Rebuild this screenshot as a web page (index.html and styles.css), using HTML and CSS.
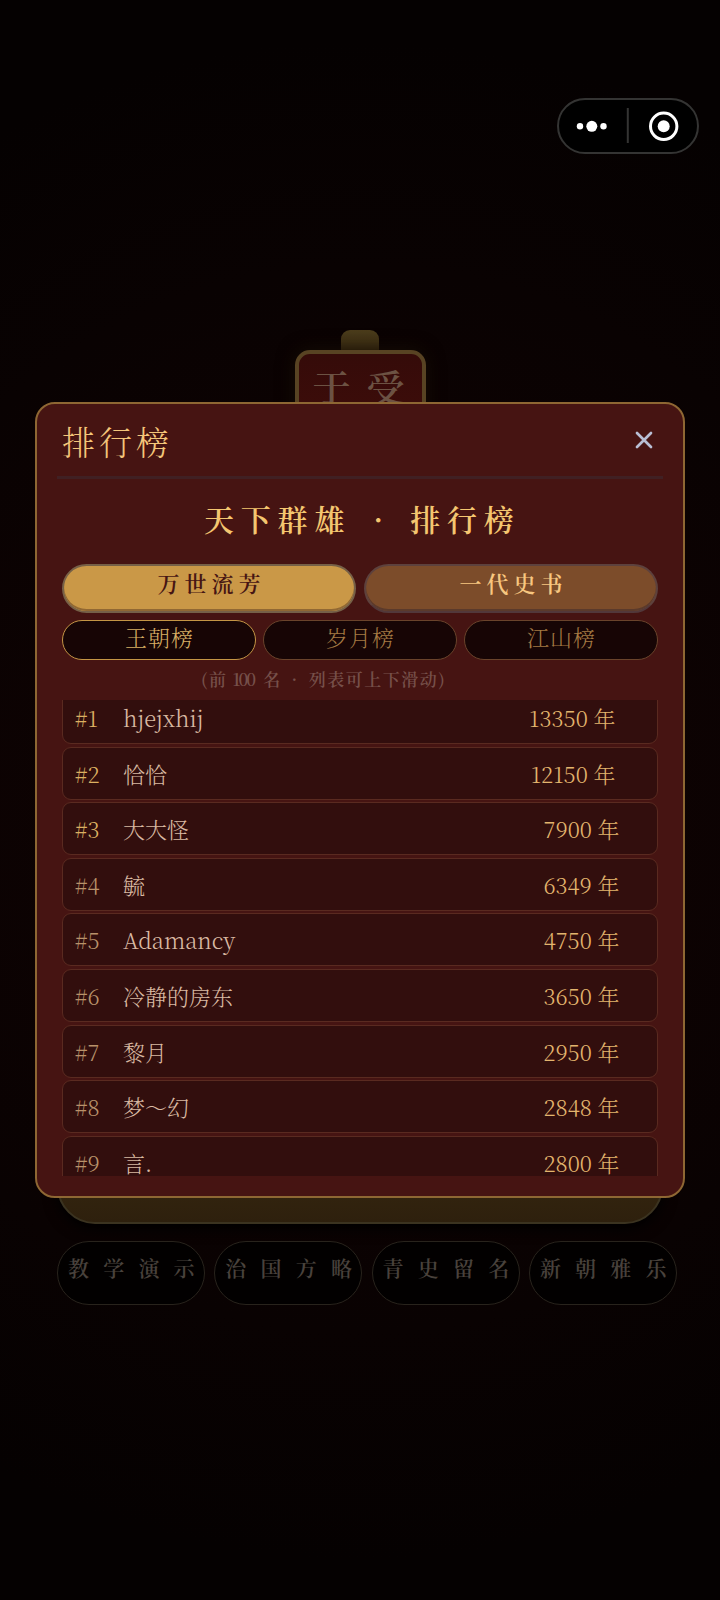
FILE: index.html
```html
<!DOCTYPE html>
<html lang="zh-CN">
<head>
<meta charset="utf-8">
<title>排行榜</title>
<link rel="stylesheet" href="styles.css">
</head>
<body>
<main class="screen">
  <div class="capsule">
    <svg viewBox="0 0 142 56" width="142" height="56">
      <rect x="1" y="1" width="140" height="54" rx="27" fill="#000" stroke="#343433" stroke-width="2"/>
      <circle cx="23" cy="28.3" r="3.2" fill="#fff"/><circle cx="34.8" cy="28.3" r="5.5" fill="#fff"/><circle cx="46.5" cy="28.3" r="3.2" fill="#fff"/>
      <path d="M70.8 10v35" stroke="#343433" stroke-width="2"/>
      <circle cx="106.7" cy="28.3" r="13.2" fill="none" stroke="#fff" stroke-width="3"/><circle cx="106.7" cy="28.3" r="6" fill="#fff"/>
    </svg>
  </div>
  <div class="emblem"><div class="knob"></div><div class="plaque">于受</div></div>
  <div class="start"></div>
  <nav class="links">
    <div class="link">教学演示</div><div class="link">治国方略</div><div class="link">青史留名</div><div class="link">新朝雅乐</div>
  </nav>

  <section class="modal">
    <header class="head">
      <h1 class="name">排行榜</h1>
      <svg class="close" viewBox="0 0 18 18" width="18" height="18"><path d="M2 2l14 14M16 2L2 16" fill="none" stroke="#b9bfd4" stroke-width="2.7" stroke-linecap="round"/></svg>
    </header>
    <h2 class="title"><span>天下群雄</span><span class="dot">·</span><span>排行榜</span></h2>
    <div class="tabs"><div class="tab on">万世流芳</div><div class="tab">一代史书</div></div>
    <div class="subs"><div class="sub on">王朝榜</div><div class="sub">岁月榜</div><div class="sub">江山榜</div></div>
    <p class="hint"><span>(前</span><span class="hundred">100</span><span>名</span><span class="sep">·</span><span>列表可上下滑动)</span></p>
    <div class="list">
      <div class="row top"><span class="rank">#1</span><span class="who">hjejxhij</span><span class="years wide">13350 年</span></div>
      <div class="row top"><span class="rank">#2</span><span class="who">恰恰</span><span class="years wide">12150 年</span></div>
      <div class="row top"><span class="rank">#3</span><span class="who">大大怪</span><span class="years">7900 年</span></div>
      <div class="row"><span class="rank">#4</span><span class="who">毓</span><span class="years">6349 年</span></div>
      <div class="row"><span class="rank">#5</span><span class="who">Adamancy</span><span class="years">4750 年</span></div>
      <div class="row"><span class="rank">#6</span><span class="who">冷静的房东</span><span class="years">3650 年</span></div>
      <div class="row"><span class="rank">#7</span><span class="who">黎月</span><span class="years">2950 年</span></div>
      <div class="row"><span class="rank">#8</span><span class="who">梦～幻</span><span class="years">2848 年</span></div>
      <div class="row last"><span class="rank">#9</span><span class="who">言.</span><span class="years">2800 年</span></div>
    </div>
  </section>
</main>
</body>
</html>
```
FILE: styles.css
```css
* { box-sizing: border-box; }
body { margin: 0; background: #050101; }
h1, h2, p { margin: 0; font-weight: 300; }

.screen {
  position: relative;
  width: 720px;
  height: 1600px;
  overflow: hidden;
  padding-top: 98px;
  background: radial-gradient(ellipse 760px 760px at 50% 50%, #120303 0%, #090202 70%, #050101 100%);
  font-family: "Noto Serif CJK SC", "Noto Sans CJK SC", serif;
  font-weight: 300;
}
.capsule { display: flex; justify-content: flex-end; height: 56px; padding-right: 21px; }

.emblem { display: flex; flex-direction: column; align-items: center; margin-top: 176px; }
.knob {
  width: 38px;
  height: 20px;
  border-radius: 9px 9px 0 0;
  background: linear-gradient(#4b3c1b, #3d2f13);
}
.plaque {
  width: 131px;
  height: 151px;
  padding: 4px 0 0 14px;
  border: 4px solid #584323;
  border-radius: 15px;
  background: linear-gradient(#350b09, #460e0b);
  box-shadow: 0 0 18px #150c04;
  color: #6c5243;
  font-size: 38px;
  font-weight: 600;
  line-height: 56px;
  letter-spacing: 16px;
  white-space: nowrap;
}
.start {
  width: 606px;
  height: 90px;
  margin: 633px 0 0 57px;
  border: 2px solid #3b3320;
  border-radius: 38px;
  background: linear-gradient(#3a2a12, #2e200d);
  box-shadow: 0 5px 14px #000;
}
.links { display: flex; gap: 9.3px; margin: 17px 0 0 57px; }
.link {
  width: 148px;
  height: 64px;
  border: 1px solid #28231c;
  border-radius: 32px;
  background: #020000;
  color: #49423c;
  font-size: 21px;
  font-weight: 600;
  line-height: 51px;
  letter-spacing: 14.2px;
  padding-left: 10px;
  white-space: nowrap;
}

/* leaderboard dialog over the home screen */
.modal {
  position: absolute;
  left: 35px;
  top: 402px;
  width: 650px;
  height: 796px;
  padding: 0 25px;
  border: 2px solid #8e6733;
  border-radius: 20px;
  background: #461412;
}
.head {
  display: flex;
  justify-content: space-between;
  height: 75px;
  margin: 0 -5px;
  padding: 0 10px 0 5px;
  border-bottom: 3px solid #402023;
}
.name { color: #f4c67a; font-size: 33px; line-height: 74px; letter-spacing: 4px; }
.close { margin-top: 27px; }
.title {
  display: flex;
  padding: 17px 0 0 142px;
  color: #f4c670;
  font-size: 30px;
  font-weight: 600;
  line-height: 44px;
  letter-spacing: 6.8px;
}
.dot { width: 59px; padding-left: 2px; text-align: center; }
.tabs { display: flex; gap: 8px; margin-top: 24px; }
.tab {
  width: 294px;
  height: 49px;
  padding-left: 5px;
  border: 2px solid #5d413d;
  border-bottom-color: #52383a;
  border-radius: 25px;
  background: #7c4c2a;
  box-shadow: inset 0 -2px #5b3a2b;
  color: #f8c780;
  font-size: 22px;
  font-weight: 600;
  line-height: 34px;
  letter-spacing: 5px;
  text-align: center;
}
.tab.on { background: #ca9847; color: #461513; border-color: #766047; box-shadow: inset 0 -2px #916833; }
.subs { display: flex; gap: 7px; margin-top: 7px; }
.sub {
  flex: 1;
  height: 40px;
  padding-left: 1px;
  border: 1px solid #6a432b;
  border-radius: 20px;
  background: #170505;
  color: #a47a43;
  font-size: 22px;
  line-height: 32px;
  letter-spacing: 1px;
  text-align: center;
}
.sub.on { border-color: #c49545; color: #d6ae64; }
.hint {
  display: flex;
  height: 40px;
  padding-left: 139px;
  color: #76504a;
  font-size: 17px;
  font-weight: 600;
  line-height: 37px;
  letter-spacing: 1.5px;
  white-space: nowrap;
}
.hundred { margin: 0 9px 0 5px; letter-spacing: -2px; }
.sep { width: 27px; text-align: center; }
.list {
  display: flex;
  flex-direction: column;
  gap: 2.6px;
  height: 476px;
  overflow: hidden;
}
.row {
  display: flex;
  flex: none;
  height: 53px;
  padding: 0 37.5px 0 12px;
  border: 1px solid #5a2a20;
  border-radius: 9px;
  background: #320e0d;
  font-size: 22px;
  line-height: 51px;
}
.row:first-child { margin-top: -9px; }
.last { height: 40px; border-bottom: 0; border-radius: 9px 9px 0 0; }
.rank { width: 48px; color: #b9926a; }
.top .rank { color: #dcb062; }
.who { flex: 1; color: #d9b9a2; }
.years { color: #e3b56e; }
.wide { padding-right: 4px; }
```
